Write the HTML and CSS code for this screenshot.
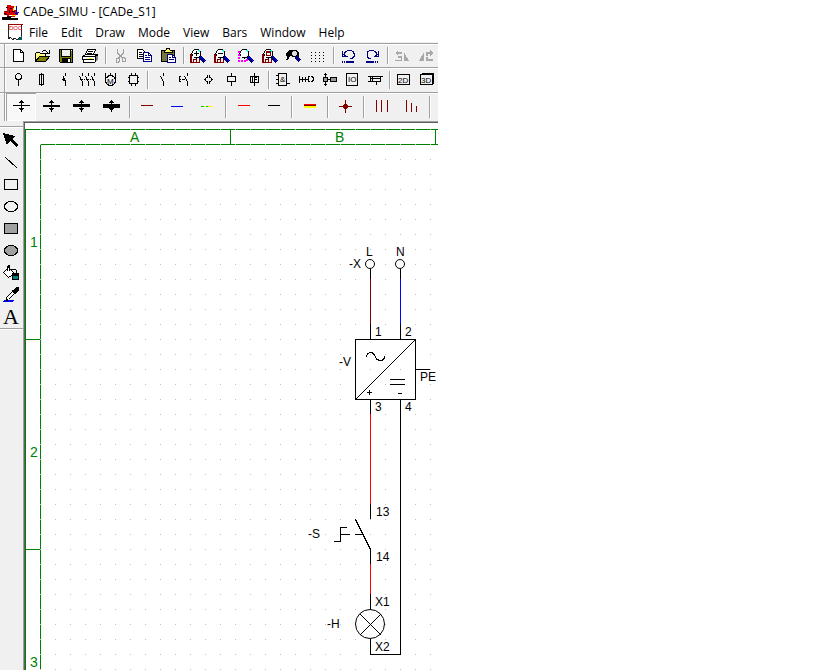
FILE: index.html
```html
<!DOCTYPE html>
<html lang="en">
<head>
<meta charset="utf-8">
<title>CADe_SIMU - [CADe_S1]</title>
<link rel="stylesheet" href="styles.css">
</head>
<body>
<svg class="defs" aria-hidden="true">
  <defs>
    <g id="lens">
      <circle cx="10.500" cy="8.500" r="4.500" fill="#fff" stroke="#000"/>
      <path d="M12 5.500h2M13.500 5v2" stroke="#0ff" fill="none"/>
      <path d="M14 12l5 5" stroke="#000080" stroke-width="3" fill="none"/>
      <path d="M15 12l4 4" stroke="#00f" fill="none"/>
    </g>
    <path id="page" d="M6.500 9.500h-2v8h9v-5M5.500 10v7M7.500 17.500v-3h3v3" fill="none" stroke="#800000"/>
    <path id="squeeze" d="M15 7h1v12h-1zM14 8h3v1h-3zM13 9h5v1h-5zM14 16h3v1h-3zM13 15h5v1h-5z"/>
  </defs>
</svg>
<main class="app">
  <header class="title">
    <svg width="18" height="18" viewBox="0 0 18 18"><path d="M0 14h9v1h7v2H0z" fill="#000"/><path d="M5 2h4v1h3v4h2v2h2v3h-3v2h-3v-2H7v2H5v-2H2V8h3z" fill="#e00000"/><path d="M4 4h2M8 5h2M3 8h2M7 7v3M2 10l3 2M5 13h5M10 8h3" stroke="#300000" fill="none"/><path d="M14.500 3v8M12 9l2.500 2 2.500-2" stroke="#00d" fill="none"/><path d="M11.500 5v3M10 12.500h4M12 3.500h2" stroke="#ffe000" fill="none"/></svg>
    <h1>CADe_SIMU - [CADe_S1]</h1>
  </header>
  <nav class="menu">
    <svg width="16" height="18" viewBox="0 0 16 18"><path d="M1.500 1V14.500l2-1 2 2 2-1 3 1 4-3V1" fill="#fff" stroke="#222"/><path d="M1 .500h15" stroke="#a00000"/><path d="M10 16l5-5v5z" fill="#006060"/><text class="doc" x="2" y="6">DOC</text></svg>
    <a href="#">File</a><a href="#">Edit</a><a href="#">Draw</a><a href="#">Mode</a><a href="#">View</a><a href="#">Bars</a><a href="#">Window</a><a href="#">Help</a>
  </nav>

  <div class="bar files">
    <button aria-label="New"><svg width="24" height="22"><path d="M7.500 4.500h7l3 3v9h-10z" fill="#fff" stroke="#000"/><path d="M14.500 4v3.500h3" fill="none" stroke="#000"/></svg></button>
    <button aria-label="Open"><svg width="24" height="22"><path d="M5.500 16.500v-8l1-1h3l1 1h5v3h-6z" fill="#ffff80" stroke="#000"/><path d="M5.500 16.500l4-5h10l-4 5z" fill="#808000" stroke="#000"/><path d="M12 6.500h1M13 5.500h3M16 6.500h1M17 7.500h1M19.500 4.500v4M16 8.500h4" stroke="#000"/></svg></button>
    <button aria-label="Save"><svg width="24" height="22"><path d="M5.500 4.500h13v13h-12l-1-1z" fill="#808000" stroke="#000"/><path d="M8 5h8v6H8z" fill="#f0f0f0"/><path d="M7.500 5v6.500h9V5" fill="none" stroke="#000"/><path d="M8 13h9v4H8z" fill="#000"/><path d="M14 14h2v3h-2zM17 5h1v1h-1z" fill="#fff"/></svg></button>
    <button aria-label="Print"><svg width="24" height="22"><path d="M9.500 4.500h8l-2 5h-8z" fill="#fff" stroke="#000"/><path d="M10 6.500h5M9 8.500h5" stroke="#000"/><path d="M4.500 11.500l3-2h12v5l-3 3h-11z" fill="#fff" stroke="#000"/><path d="M5 11.500h12v5M17 11l3-2M5 14.500h11" fill="none" stroke="#000"/><path d="M18 11h2v3l-2 3z" fill="#808080"/><path d="M11 13.500h3" stroke="#ff0"/></svg></button>
    <i class="sep"></i>
    <button aria-label="Cut"><svg width="24" height="22"><path d="M9.500 4v4l5 5M15.500 4v4l-5 5" fill="none" stroke="#a0a0a0"/><path d="M8.500 13.500h3v2l-1 2h-2zM14.500 12.500h2l1 2v2h-3z" fill="none" stroke="#a0a0a0"/></svg></button>
    <button aria-label="Copy"><svg width="24" height="22"><path d="M5.500 4.500h5l2 2v7h-7z" fill="#fff" stroke="#000"/><path d="M7 7.500h3M7 9.500h4M7 11.500h4" stroke="#000"/><path d="M11.500 7.500h5l3 3v6h-8z" fill="#fff" stroke="#000080"/><path d="M16.500 8v2.500h3M13 10.500h2M13 12.500h5M13 14.500h5" fill="none" stroke="#000080"/></svg></button>
    <button aria-label="Paste"><svg width="24" height="22"><path d="M5.500 5.500h13v11h-13z" fill="#77773c" stroke="#000"/><path d="M8 7h8v-2h-2l-1-2h-2l-1 2H8z" fill="#ffff60" stroke="#000"/><path d="M11.500 9.500h5l3 3v5h-8z" fill="#fff" stroke="#000080"/><path d="M16.500 10v2.500h3M13 12.500h2M13 14.500h5" fill="none" stroke="#000080"/></svg></button>
    <i class="sep"></i>
    <button aria-label="Zoom in"><svg width="24" height="22"><use href="#page"/><use href="#lens"/><path d="M8 8.500h5M10.500 6v5" stroke="#000"/></svg></button>
    <button aria-label="Zoom out"><svg width="24" height="22"><use href="#page"/><use href="#lens"/><path d="M8 8.500h5" stroke="#000"/></svg></button>
    <button aria-label="Zoom window"><svg width="24" height="22"><path d="M5 7h8v9H5z" fill="none" stroke="#f0f" stroke-width="2" stroke-dasharray="2 1"/><use href="#lens"/></svg></button>
    <button aria-label="Zoom page"><svg width="24" height="22"><use href="#page"/><use href="#lens"/><path d="M8.500 6.500h4v4h-4z" fill="none" stroke="#800000"/><path d="M9 7h3v1H9z" fill="#800000"/></svg></button>
    <button aria-label="Find"><svg width="24" height="22"><path d="M4 8l3-3h7l3 3v4h-5l-3-2-3 3H5z" fill="#000"/><circle cx="12.500" cy="8.500" r="3" fill="#ddd" stroke="#000"/><path d="M7 11l-2 4" stroke="#000" stroke-width="2"/><path d="M14 12l4 4" stroke="#000080" stroke-width="3"/></svg></button>
    <button aria-label="Grid"><svg width="24" height="22"><path d="M5 7.500h14M5 10.500h14M5 13.500h14M5 16.500h14" stroke="#000" stroke-dasharray="1 3"/></svg></button>
    <i class="sep"></i>
    <button aria-label="Undo"><svg width="24" height="22"><path d="M8 8.500l2-2 2-1h3l2 1 1 2v3l-2 2h-2M6.500 6v5.500h5M7 9l3 2" fill="none" stroke="#000080"/><path d="M6 17h1M8 17h1M10 17h8" stroke="#000080" stroke-width="2"/></svg></button>
    <button aria-label="Redo"><svg width="24" height="22"><path d="M17 8.500l-2-2-2-1h-3l-2 1-1 2v3l2 2h2M18.500 6v5.500h-5M18 9l-3 2" fill="none" stroke="#000080"/><path d="M6 17h8M15 17h1M17 17h1" stroke="#000080" stroke-width="2"/></svg></button>
    <i class="sep"></i>
    <button aria-label="Rotate left"><svg width="24" height="22"><path d="M5 15h6v-2H8v-2h4v5H5zM14 7l5 9h-5zM5 8l3-3v2h4v2H8v2z" fill="#a8a8a8"/></svg></button>
    <button aria-label="Rotate right"><svg width="24" height="22"><path d="M5 16l5-9v9zM12 12h2v2h5v2h-7zM19 8l-3-3v2h-4v4h2V9h2v2z" fill="#a8a8a8"/></svg></button>
  </div>

  <div class="bar parts">
    <button aria-label="Terminal"><svg width="23" height="22"><circle cx="12.500" cy="7.500" r="3" fill="none" stroke="#000"/><path d="M12.500 11v6" stroke="#000"/></svg></button>
    <button aria-label="Fuse"><svg width="23" height="22"><path d="M10.500 5.500h4v10h-4zM12.500 4v13" fill="none" stroke="#000"/></svg></button>
    <button aria-label="Breaker"><svg width="23" height="22"><path d="M13.500 4v3M13.500 13v4M11 7.500l3 6" fill="none" stroke="#000"/><path d="M9 11l3-2v3z" fill="#000"/></svg></button>
    <button aria-label="Contactor"><svg width="23" height="22"><path d="M7.500 4v3M7.500 13v4M4.500 7l3 6M13.500 4v3M13.500 13v4M10.500 7l3 6M19.500 4v3M19.500 13v4M16.500 7l3 6" fill="none" stroke="#000"/><path d="M5 10.500h13" stroke="#000" stroke-dasharray="1 1"/></svg></button>
    <button aria-label="Motor"><svg width="23" height="22"><circle cx="12.500" cy="11.500" r="5" fill="none" stroke="#000"/><path d="M7.500 4v4h2M12.500 4v3M17.500 4v4h-2" fill="none" stroke="#000"/><text class="glyph" x="9" y="15">M</text></svg></button>
    <button aria-label="Module"><svg width="23" height="22"><path d="M8.500 6.500h8v8h-8zM10.500 4v3M14.500 4v3M10.500 15v2M14.500 15v2M7 8.500h1M7 12.500h1M17 8.500h1M17 12.500h1" fill="none" stroke="#000"/></svg></button>
    <i class="sep"></i>
    <button aria-label="Contact"><svg width="23" height="22"><path d="M13.500 4v3M13.500 13v4M10.500 7l3 6" fill="none" stroke="#000"/></svg></button>
    <button aria-label="Push button"><svg width="23" height="22"><path d="M14.500 4v3M14.500 13v4M11.500 7l3 6M8 7.500h-2v5h2M6 10.500h2M9 10.500h3" fill="none" stroke="#000"/></svg></button>
    <button aria-label="Sensor"><svg width="23" height="22"><path d="M8 10h1v1H8zM9 9h1v3H9zM10 8h1v1h-1zM10 12h1v1h-1zM11 6h1v3h-1zM11 12h1v3h-1zM13 6h1v3h-1zM13 12h1v3h-1zM14 8h1v1h-1zM14 12h1v1h-1zM15 9h1v3h-1zM16 10h1v1h-1z"/></svg></button>
    <button aria-label="Coil"><svg width="23" height="22"><path d="M8.500 7.500h8v5h-8zM12.500 4v3M12.500 13v4" fill="none" stroke="#000"/></svg></button>
    <button aria-label="Timer coil"><svg width="23" height="22"><path d="M8.500 7.500h8v6h-8zM12.500 4v13M10.500 8v5M13 8.500h2M13 10.500h2" fill="none" stroke="#000"/></svg></button>
    <i class="sep"></i>
    <button aria-label="Logic gate"><svg width="23" height="22"><path d="M7.500 4.500h8v12h-8zM5 6.500h2M5 10.500h2M5 14.500h2M16 14.500h3" fill="none" stroke="#000"/><text class="glyph" x="9" y="13">&amp;</text></svg></button>
    <button aria-label="Valve"><svg width="23" height="22"><path d="M5.500 7v7M5 10.500h6M8.500 8v5M11.500 8v5M12 10.500h2M15.500 7.500h-1v5h1M17 7.500h1l1 1v3l-1 1h-1" fill="none" stroke="#000"/></svg></button>
    <button aria-label="Cylinder"><svg width="23" height="22"><path d="M8.500 4v13M7 5.500h3M7 15.500h3" stroke="#000"/><path d="M6.500 8.500h4v4h-4zM13.500 8.500h6v4h-6z" fill="#999" stroke="#000"/><path d="M11 10.500h3" stroke="#000"/></svg></button>
    <button aria-label="Input output"><svg width="23" height="22"><path d="M6.500 4.500h11v12h-11z" fill="none" stroke="#000"/><text class="glyph" x="8" y="13">IO</text></svg></button>
    <button aria-label="Connector"><svg width="23" height="22"><path d="M7.500 7.500h10v5h-10zM5 7.500h15M5 12.500h2M8 9.500h9M9.500 7v5M13.500 13v3" fill="none" stroke="#000"/></svg></button>
    <i class="sep"></i>
    <button aria-label="2D"><svg width="23" height="22"><path d="M5.500 5.500h12v10h-12z" fill="none" stroke="#000"/><text class="glyph" x="6" y="14">2D</text></svg></button>
    <button aria-label="3D"><svg width="23" height="22"><path d="M18 4v11M7 5h12" stroke="#000" stroke-width="2"/><path d="M5.500 5.500h12v10h-12z" fill="none" stroke="#000"/><text class="glyph" x="6" y="14">3D</text></svg></button>
  </div>

  <div class="bar wires">
    <button class="on" aria-label="Width 1"><svg width="30" height="28"><use href="#squeeze"/><path d="M7 12h17v1H7z"/></svg></button>
    <button aria-label="Width 2"><svg width="30" height="28"><use href="#squeeze"/><path d="M7 12h17v2H7z"/></svg></button>
    <button aria-label="Width 3"><svg width="30" height="28"><use href="#squeeze"/><path d="M7 11h17v3H7z"/></svg></button>
    <button aria-label="Width 4"><svg width="30" height="28"><use href="#squeeze"/><path d="M7 11h17v4H7z"/></svg></button>
    <i class="sep"></i>
    <button aria-label="Brown wire"><svg width="30" height="28"><path d="M9 12h12v1H9z" fill="#800000"/></svg></button>
    <button aria-label="Blue wire"><svg width="30" height="28"><path d="M9 13h12v1H9z" fill="#00f"/></svg></button>
    <button aria-label="Earth wire"><svg width="30" height="28"><path d="M9 13h12v1H9z" fill="#ff0"/><path d="M9 13h3v1H9zM14 13h2v1h-2z" fill="#0c0"/></svg></button>
    <i class="sep"></i>
    <button aria-label="Red wire"><svg width="30" height="28"><path d="M10 12h12v1H10z" fill="red"/></svg></button>
    <button aria-label="Black wire"><svg width="30" height="28"><path d="M10 12h12v1H10z"/></svg></button>
    <i class="sep"></i>
    <button aria-label="Cable"><svg width="30" height="28"><path d="M10 11h12v1H10z" fill="red"/><path d="M10 12h12v1H10z" fill="#800000"/><path d="M10 13h12v2H10z" fill="#ff0"/></svg></button>
    <i class="sep"></i>
    <button aria-label="Junction"><svg width="30" height="28"><path d="M15 7h1v13h-1zM9 13h13v1H9zM14 11h3v1h1v3h-1v1h-3v-1h-1v-3h1z" fill="#800000"/></svg></button>
    <i class="sep"></i>
    <button aria-label="Three wires"><svg width="30" height="28"><path d="M10.500 7v12M15.500 7v12M21.500 7v12" stroke="#800000"/></svg></button>
    <button aria-label="Stepped wires"><svg width="30" height="28"><path d="M10.500 7v12M15.500 10v9M20.500 13v6" stroke="#800000"/></svg></button>
    <i class="sep"></i>
  </div>

  <div class="work">
    <div class="side">
      <div class="tools">
        <button aria-label="Select"><svg width="22" height="22"><path d="M3 3l12 3-3 3 6 6-2 2-6-6-3 4z"/></svg></button>
        <button aria-label="Line"><svg width="22" height="22"><path d="M5 5l12 11" stroke="#000"/></svg></button>
        <button aria-label="Rectangle"><svg width="22" height="22"><path d="M4.500 5.500h13v10h-13z" fill="none" stroke="#000"/></svg></button>
        <button aria-label="Ellipse"><svg width="22" height="22"><ellipse cx="11" cy="10.500" rx="6.500" ry="5" fill="none" stroke="#000"/></svg></button>
        <button aria-label="Filled rectangle"><svg width="22" height="22"><path d="M4.500 5.500h13v10h-13z" fill="#a0a0a0" stroke="#000"/></svg></button>
        <button aria-label="Filled ellipse"><svg width="22" height="22"><ellipse cx="11" cy="10.500" rx="6.500" ry="5" fill="#a0a0a0" stroke="#000"/></svg></button>
        <button aria-label="Fill"><svg width="22" height="22"><path d="M3.500 10.500l5-5 6 6-6 4z" fill="#fff" stroke="#000"/><path d="M7.500 9V4.500l2-1V9M11 7l5 1v4" fill="none" stroke="#000"/><path d="M12 11h7v7h-7z"/><path d="M13 14h5v3h-5z" fill="#008080"/></svg></button>
        <button aria-label="Pick colour"><svg width="22" height="22"><path d="M4 16h10v1H4zM3 17h10v1H3z" fill="#00f"/><path d="M6.500 16.500v-3l6-6 2 2-6 6z" fill="#fff" stroke="#000"/><path d="M11 6h2l3-3h2l1 1v2l-3 3v2z"/></svg></button>
        <button class="letter" aria-label="Text">A</button>
      </div>
    </div>
    <section class="sheet">
      <svg width="100%" height="547" role="img" aria-label="Circuit sheet">
        <defs><pattern id="dots" x="40" y="129" width="15" height="15" patternUnits="userSpaceOnUse"><path d="M0 0h1v1H0z" fill="#c0c0c0"/></pattern></defs>
        <g transform="translate(-25 -123)" fill="none" stroke="#000">
          <path stroke="#008000" d="M25.500 670V129.500H438M40.500 670V144.500H438M230.500 129v16M435.500 129v16M25 339.500h16M25 549.500h16"/>
          <rect x="40" y="129" width="398" height="541" fill="url(#dots)" stroke="none"/>
          <g class="zone"><text x="130" y="142">A</text><text x="335" y="142">B</text><text x="30" y="247">1</text><text x="30" y="457">2</text><text x="30" y="667">3</text></g>
          <path d="M370.500 269v11M370.500 324v15M400.500 269v11M400.500 324v15M370.500 399v15M370.500 504v15M370.500 549v15M370.500 594v15M370.500 639v15.500h30V399M415 369.500h15"/>
          <path stroke="#800000" d="M370.500 279v45"/>
          <path stroke="#00f" d="M400.500 279v45"/>
          <path stroke="red" d="M370.500 414v90M370.500 564v30"/>
          <path d="M355.500 339.500h60v60h-60zM390 379.500h15M390 384.500h15M367 392.500h5M369.500 390v5M398 393.500h4"/>
          <g class="smooth"><circle cx="370" cy="264" r="4.500" fill="#fff"/><circle cx="400" cy="264" r="4.500" fill="#fff"/><circle cx="370" cy="624" r="14.500"/></g>
          <path d="M355.500 399.500l60-60M360 614l21 21M381 614l-21 21M355.500 519.500l15 30"/>
          <path d="M366 356.500l2-3 2-1h2l2 2 3 5 3 1h2l2-2 1-2"/>
          <path d="M334 541.500h6.500v-14h6.500M340 534.500h10M355 534.500h8"/>
          <g class="label"><text x="366" y="256">L</text><text x="396" y="256">N</text><text x="349" y="268">-X</text><text x="375" y="336">1</text><text x="405" y="336">2</text><text x="339" y="366">-V</text><text x="420" y="381">PE</text><text x="375" y="411">3</text><text x="405" y="411">4</text><text x="376" y="516">13</text><text x="376" y="561">14</text><text x="308" y="538">-S</text><text x="375" y="606">X1</text><text x="327" y="628">-H</text><text x="375" y="651">X2</text></g>
        </g>
      </svg>
    </section>
  </div>
</main>
</body>
</html>
```
FILE: styles.css
```css
* { box-sizing: border-box; }
body { margin: 0; background: #fff; font-family: "Open Sans", "Noto Sans", sans-serif; font-size: 12px; color: #000; overflow: hidden; }
svg { display: block; flex: none; shape-rendering: crispEdges; }
.defs { width: 0; height: 0; position: absolute; }
.app { max-width: 438px; min-height: 100vh; display: flex; flex-direction: column; overflow: hidden; }
.title { height: 23px; display: flex; align-items: center; gap: 3px; padding-left: 2px; }
h1 { margin: 0; font-size: 12px; font-weight: 400; line-height: 23px; white-space: nowrap; }
.menu { height: 20px; display: flex; align-items: center; gap: 13px; padding-left: 7px; border-bottom: 1px solid #f0f0f0; }
.menu svg { margin-right: -7px; }
.menu a { color: inherit; text-decoration: none; line-height: 18px; padding-top: 1px; }
button { flex: none; padding: 0; margin: 0; border: 0; background: none; color: #000; display: flex; align-items: center; justify-content: center; }
.bar { display: flex; align-items: stretch; background: #f0f0f0; border-top: 1px solid #a0a0a0; box-shadow: inset 0 1px #fff; overflow: hidden; }
.bar::before { content: ""; flex: none; width: 2px; margin-left: 4px; background: linear-gradient(90deg, #a0a0a0 50%, #fff 50%); }
.files { height: 24px; }
.parts { height: 25px; }
.wires { height: 29px; }
.sep { flex: none; width: 6px; margin: 3px 0; background: linear-gradient(90deg, transparent 3px, #a0a0a0 3px, #a0a0a0 4px, #fff 4px, #fff 5px, transparent 5px); }
.on { background: #f8f8f8; box-shadow: inset 1px 1px #a0a0a0, inset -1px -1px #fff; }
.work { flex: 1; display: flex; background: #f0f0f0; }
.side { flex: none; width: 23px; padding-top: 5px; }
.tools { border-top: 1px solid #a0a0a0; border-bottom: 1px solid #a0a0a0; box-shadow: 0 1px #fff, inset 0 1px #fff; padding: 3px 0 0; }
.tools button { width: 22px; height: 22px; }
.tools .letter { font: 400 22px/22px "Liberation Serif", serif; }
.sheet { flex: 1; min-width: 0; background: #fff; border-top: 1px solid #a0a0a0; border-left: 1px solid #a0a0a0; box-shadow: inset 1px 1px #606060; padding: 1px 0 0 1px; overflow: hidden; }
.smooth { shape-rendering: auto; }
.label, .zone, .glyph, .doc { font-family: "Liberation Sans", Arial, sans-serif; font-size: 12px; fill: #000; stroke: none; }
.zone { font-size: 14px; fill: #008000; }
.glyph { font-size: 8px; }
.doc { font-size: 6px; fill: #e00000; }
```
